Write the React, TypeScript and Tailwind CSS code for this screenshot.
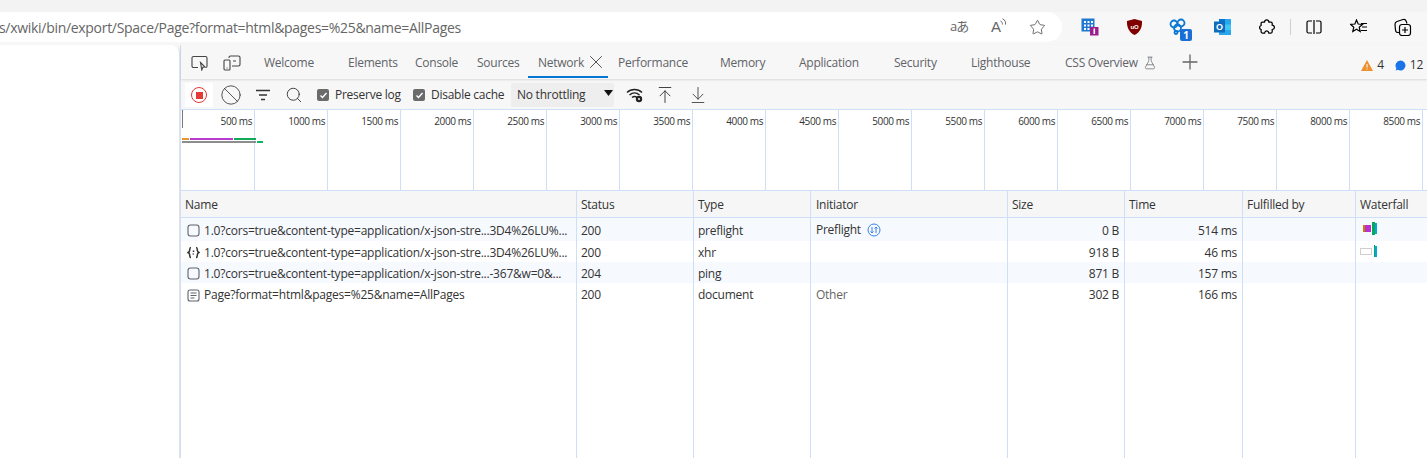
import { ArrowDownToLine, ArrowUpToLine, Ban, FlaskConical, Plus, Search, Star, X } from "lucide-react";
import type { ReactNode } from "react";

const tabs = [
  { label: "Welcome", cls: "w-[84px]" },
  { label: "Elements", cls: "w-[67px]" },
  { label: "Console", cls: "w-[62px]" },
  { label: "Sources", cls: "w-[51px]" },
];

const tabsAfter = [
  { label: "Performance", cls: "w-[102px]" },
  { label: "Memory", cls: "w-[79px]" },
  { label: "Application", cls: "w-[95px]" },
  { label: "Security", cls: "w-[77px]" },
  { label: "Lighthouse", cls: "w-[94px]" },
];

const ticks = [500, 1000, 1500, 2000, 2500, 3000, 3500, 4000, 4500, 5000, 5500, 6000, 6500, 7000, 7500, 8000, 8500];

function ToolbarIcon({ children, className }: { children: ReactNode; className: string }) {
  return <div className={`flex items-center justify-center h-[30px] ${className}`}>{children}</div>;
}

function RowCells({ cells, className, header }: { cells: ReactNode[]; className: string; header?: boolean }) {
  return (
    <div className={`flex shrink-0 ${className}`}>
      <div className={`w-[396px] shrink-0 flex items-center pt-[2px] border-r border-[#cfdff7] overflow-hidden whitespace-nowrap tracking-[-0.22px] ${header ? "pl-[4px]" : "pl-[6px]"}`}>{cells[0]}</div>
      <div className="w-[117px] shrink-0 flex items-center pt-[2px] pl-1 border-r border-[#cfdff7]">{cells[1]}</div>
      <div className="w-[117px] shrink-0 flex items-center pt-[2px] pl-1 border-r border-[#cfdff7]">{cells[2]}</div>
      <div className="w-[197px] shrink-0 flex items-center pt-[2px] pl-[5px] border-r border-[#cfdff7]">{cells[3]}</div>
      <div className={`w-[117px] shrink-0 flex items-center pt-[2px] border-r border-[#cfdff7] ${header ? "pl-[4px]" : "justify-end pr-[5px]"}`}>{cells[4]}</div>
      <div className={`w-[118px] shrink-0 flex items-center pt-[2px] border-r border-[#cfdff7] ${header ? "pl-[4px]" : "justify-end pr-[5px]"}`}>{cells[5]}</div>
      <div className="w-[113px] shrink-0 flex items-center pt-[2px] pl-[4px] border-r border-[#cfdff7]">{cells[6]}</div>
      <div className="flex-1 flex items-center pt-[2px] pl-[4px]">{cells[7]}</div>
    </div>
  );
}

function BlankIcon() {
  return (
    <svg width="13" height="13" viewBox="0 0 13 13" className="mr-[4px] shrink-0" fill="none" stroke="#5f6368" strokeWidth="1.1">
      <rect x="1" y="1" width="11" height="11" rx="2.5" />
    </svg>
  );
}

function XhrIcon() {
  return (
    <svg width="13" height="13" viewBox="0 0 13 13" className="mr-[4px] shrink-0" fill="none" stroke="#333" strokeWidth="1.5">
      <path d="M4 1.500C2.500 1.500 2.800 3 2.600 4.600 2.500 5.600 2 6 1 6.500c1 .5 1.500.9 1.600 1.900.2 1.600-.1 3.100 1.400 3.100" />
      <path d="M9 1.500c1.500 0 1.200 1.500 1.400 3.100.1 1 .6 1.400 1.600 1.900-1 .5-1.500.9-1.600 1.900-.2 1.600.1 3.100-1.400 3.100" />
      <path d="M6.500 4.500v1.500M6 8.500l.5-1" />
    </svg>
  );
}

function DocIcon() {
  return (
    <svg width="13" height="13" viewBox="0 0 13 13" className="mr-[4px] shrink-0" fill="none" stroke="#5f6368" strokeWidth="1.1">
      <rect x="1" y="1" width="11" height="11" rx="2" />
      <path d="M3.500 4h6M3.500 6.500h6M3.500 9h4" />
    </svg>
  );
}

function NameCell({ icon, text }: { icon: ReactNode; text: string }) {
  return (
    <>
      {icon}
      <span>{text}</span>
    </>
  );
}

export default function App() {
  return (
    <div className="w-[1427px] h-[458px] overflow-hidden bg-[#f7f7f7] flex flex-col text-[12px] text-[#333] font-['Open_Sans',sans-serif] tracking-[-0.25px]">
      <div className="h-3 bg-[#f3f3f3] shrink-0" />

      {/* browser toolbar */}
      <div className="h-[33px] shrink-0 flex items-start">
        <div className="w-[1062px] h-[30px] bg-white rounded-r-[15px] flex items-center overflow-hidden shrink-0">
          <div className="flex-1 text-[14px] text-[#666] whitespace-nowrap -ml-[1px] tracking-[-0.3px]">s/xwiki/bin/export/Space/Page?format=html&amp;pages=%25&amp;name=AllPages</div>
          <span className="w-[41px] text-[13px] text-[#666] font-['Open_Sans','Noto_Sans_CJK_JP',sans-serif] tracking-[-1px]">aあ</span>
          <div className="w-[38px] flex items-start">
            <span className="text-[15px] text-[#666] font-['Liberation_Sans',sans-serif]">A</span>
            <svg width="7" height="10" viewBox="0 0 7 10" fill="none" stroke="#666" strokeWidth="1" className="-ml-[1px] mt-[2px]"><path d="M0.500 3c1.500.5 2 2 1.800 3.500M2.500 .8c2.500 1 3.500 3.200 2.900 5.800" /></svg>
          </div>
          <Star size={17} strokeWidth={1.2} className="text-[#555] mr-[16px]" />
        </div>
        <ToolbarIcon className="w-[44px] ml-[6px]">
          <svg width="18" height="18" viewBox="0 0 18 18">
            <rect x="0.500" y="0.500" width="13" height="13" fill="#1f78d1" />
            <path d="M3 3h2v2H3zM6.500 3h2v2h-2zM10 3h2v2h-2zM3 6.500h2v2H3zM6.500 6.500h2v2h-2zM10 6.500h2v2h-2zM3 10h2v2H3zM6.500 10h2v2h-2z" fill="#fff" />
            <rect x="9" y="9" width="8.500" height="8.500" fill="#9b1d8f" />
            <rect x="12.500" y="10.500" width="1.600" height="5.500" fill="#fff" />
          </svg>
        </ToolbarIcon>
        <ToolbarIcon className="w-[44px]">
          <svg width="15" height="16" viewBox="0 0 15 16">
            <path d="M7.500 0 15 2c.2 6-1.500 11-7.500 14C1.500 13-.2 8 0 2z" fill="#800000" />
            <text x="7.500" y="9.500" textAnchor="middle" fontSize="6" fontWeight="700" fill="#fff" fontFamily="Liberation Sans">uO</text>
          </svg>
        </ToolbarIcon>
        <ToolbarIcon className="w-[44px] relative">
          <svg width="18" height="18" viewBox="0 0 18 18" fill="none" stroke="#0a78d4" strokeWidth="1.800">
            <circle cx="5" cy="6" r="3.500" />
            <circle cx="12" cy="5" r="3.500" />
            <circle cx="8.500" cy="10" r="3.500" />
            <circle cx="7" cy="14.500" r="1.500" />
          </svg>
          <span className="absolute left-[24px] top-[17px] w-3 h-3 rounded-[2px] bg-[#1a6fd6] text-white text-[10px] font-bold leading-3 text-center">1</span>
        </ToolbarIcon>
        <ToolbarIcon className="w-[44px]">
          <svg width="17" height="16" viewBox="0 0 17 16">
            <rect x="5" y="0" width="12" height="16" fill="#28a8ea" />
            <path d="M5 0h6v5.500H5z" fill="#0078d4" />
            <path d="M11 5.500h6V11h-6z" fill="#50d9ff" opacity="0.6" />
            <rect x="0" y="2.500" width="11" height="11" fill="#0f6cbd" />
            <text x="5.500" y="11" textAnchor="middle" fontSize="9" fontWeight="700" fill="#fff" fontFamily="Liberation Sans">O</text>
          </svg>
        </ToolbarIcon>
        <ToolbarIcon className="w-[46px]">
          <svg width="16" height="16" viewBox="0 0 16 16" fill="none" stroke="#000" strokeWidth="1.250">
            <path d="M5.500 3C5.700 1.300 6.500.8 7.700.8c1.300 0 2.100.8 2.200 2.200H12c.8 0 1.200.5 1.200 1.200v2c1.400.1 2.200.9 2.200 2.100s-.8 2.100-2.200 2.200v2.300c0 .7-.5 1.200-1.200 1.200H9.800c-.2-1.400-1-2.200-2.100-2.200s-1.900.8-2.100 2.200H3.300c-.7 0-1.200-.5-1.200-1.200V10.500C1.300 10.300.6 9.500.6 8.500s.7-1.900 1.500-2V4.200C2.100 3.500 2.600 3 3.300 3z" />
          </svg>
        </ToolbarIcon>
        <div className="w-px h-4 mt-[7px] bg-[#cfcfcf] shrink-0" />
        <ToolbarIcon className="w-[46px]">
          <svg width="16" height="14" viewBox="0 0 16 14" fill="none" stroke="#000" strokeWidth="1.200">
            <path d="M6 1H2.500A1.500 1.500 0 0 0 1 2.500v9A1.500 1.500 0 0 0 2.500 13H6M10 1h3.500A1.500 1.500 0 0 1 15 2.500v9a1.500 1.500 0 0 1-1.500 1.500H10M8 0v14" />
          </svg>
        </ToolbarIcon>
        <ToolbarIcon className="w-[44px]">
          <svg width="18" height="16" viewBox="0 0 18 16" fill="none" stroke="#000" strokeWidth="1.200">
            <path d="M6.500 1 8.200 5l4.300.4-3.300 2.800 1 4.200-3.700-2.200L2.800 12.400l1-4.200L.6 5.400 4.900 5z" />
            <path d="M11 4.500h6M12 8h5M11 11.500h6" />
          </svg>
        </ToolbarIcon>
        <ToolbarIcon className="w-[44px]">
          <svg width="18" height="18" viewBox="0 0 18 18" fill="none" stroke="#000" strokeWidth="1.200">
            <path d="M5 14.500H4A2.500 2.500 0 0 1 1.500 12L1 6.500C.9 5 1.800 3.900 3 3.500l6-2c1.500-.4 2.700.3 3.200 1.700l.8 2.300" />
            <rect x="5.500" y="6.500" width="11" height="11" rx="2.500" />
            <path d="M11 9v6M8 12h6" />
          </svg>
        </ToolbarIcon>
      </div>

      <div className="flex-1 flex min-h-0">
        <div className="w-[180px] shrink-0 bg-white rounded-tr-lg border-r border-[#e3e3e3]" />

        {/* devtools */}
        <div className="flex-1 flex flex-col min-w-0 bg-white border-l border-[#cfdff7]">
          <div className="h-[34px] shrink-0 flex items-stretch bg-[#f7f7f7] shadow-[0_1px_2px_rgba(0,0,0,0.12)] text-[#5f6368] relative z-10">
            <div className="w-[83px] shrink-0 pl-[10px] pt-[2px] flex items-center">
              <svg width="18" height="16" viewBox="0 0 18 16" fill="none" stroke="#444" strokeWidth="1.100">
                <path d="M7 12.500H2.500A1.500 1.500 0 0 1 1 11V3a1.500 1.500 0 0 1 1.500-1.500h12A1.500 1.500 0 0 1 16 3v8c0 .8-.6 1.400-1.300 1.500" />
                <path d="M9.500 7.500 14 12l-2.200.2-1 2.800z" />
              </svg>
              <svg width="18" height="16" viewBox="0 0 18 16" fill="none" stroke="#444" strokeWidth="1.100" className="ml-[14px]">
                <path d="M6 3V2.500A1.500 1.500 0 0 1 7.500 1h8A1.500 1.500 0 0 1 17 2.500v7a1.500 1.500 0 0 1-1.500 1.500H9" />
                <rect x="1" y="5" width="6" height="10" rx="1" />
                <path d="M10 6h3M3.500 13h1" />
              </svg>
            </div>
            {tabs.map((tab) => (
              <div key={tab.label} className={`${tab.cls} shrink-0 flex items-center pt-[2px]`}>{tab.label}</div>
            ))}
            <div className="w-[80px] shrink-0 flex items-center pl-[10px] border-b-2 border-[#0078d4] mb-px pt-[5px]">
              <span className="w-[47px] -mt-px">Network</span>
              <X size={22} strokeWidth={1} className="text-[#444] -mt-[3px]" />
            </div>
            <div className="w-[10px] shrink-0" />
            {tabsAfter.map((tab) => (
              <div key={tab.label} className={`${tab.cls} shrink-0 flex items-center pt-[2px]`}>{tab.label}</div>
            ))}
            <div className="w-[118px] shrink-0 flex items-center pt-[2px] gap-[5px]">
              <span>CSS Overview</span>
              <FlaskConical size={14} strokeWidth={1.2} />
            </div>
            <Plus size={24} strokeWidth={1.3} className="self-center -ml-[5px] text-[#666]" />
            <div className="flex-1 flex items-center justify-end pr-[4px] pt-[6px] text-[#333]">
              <svg width="12" height="11" viewBox="0 0 12 11"><path d="M6 0 12 11H0z" fill="#ec8f2d" /><path d="M5.500 4h1v3.500h-1zM5.500 8.500h1v1h-1z" fill="#fff" /></svg>
              <span className="ml-[4px] mr-[11px]">4</span>
              <svg width="11" height="11" viewBox="0 0 11 11"><path d="M5.500 .5a5 5 0 1 1-2.600 9.300L.6 10.500l.8-2.200A5 5 0 0 1 5.500.5z" fill="#1a73e8" /></svg>
              <span className="ml-[4px]">12</span>
            </div>
          </div>

          <div className="h-[31px] shrink-0 flex items-center bg-[#f7f7f7] border-b border-[#cfdff7] pt-[2px]">
            <div className="w-[28px] h-6 ml-[4px] bg-white flex items-center justify-center shrink-0">
              <div className="w-4 h-4 rounded-full border border-[#e53935] flex items-center justify-center">
                <div className="w-[7px] h-[7px] bg-[#e53935]" />
              </div>
            </div>
            <Ban size={22} strokeWidth={0.9} className="ml-[7px] shrink-0 text-[#333]" />
            <svg width="16" height="12" viewBox="0 0 16 12" fill="none" stroke="#333" strokeWidth="1.300" className="ml-[13px] shrink-0">
              <path d="M1 1.500h14M4 6h8M6 10.500h4" />
            </svg>
            <Search size={18} strokeWidth={1.2} className="ml-[14px] shrink-0 text-[#333]" />
            <div className="w-3 h-3 ml-[14px] bg-[#6b6b6b] rounded-[2px] flex items-center justify-center shrink-0">
              <svg width="9" height="9" viewBox="0 0 9 9" fill="none" stroke="#fff" strokeWidth="1.400"><path d="M1.500 4.500 3.500 6.500 7.500 2" /></svg>
            </div>
            <span className="ml-[6px] w-[78px] shrink-0">Preserve log</span>
            <div className="w-3 h-3 bg-[#6b6b6b] rounded-[2px] flex items-center justify-center shrink-0">
              <svg width="9" height="9" viewBox="0 0 9 9" fill="none" stroke="#fff" strokeWidth="1.400"><path d="M1.500 4.500 3.500 6.500 7.500 2" /></svg>
            </div>
            <span className="ml-[6px] w-[80px] shrink-0">Disable cache</span>
            <div className="w-[103px] h-6 bg-[#eeeeee] rounded-[2px] flex items-center justify-between pl-[6px] pr-[1px] shrink-0">
              <span>No throttling</span>
              <svg width="9" height="6" viewBox="0 0 9 6" className="mb-1"><path d="M0 0h9L4.500 6z" fill="#111" /></svg>
            </div>
            <svg width="18" height="16" viewBox="0 0 18 16" fill="none" stroke="#222" strokeWidth="1.400" className="ml-[12px] shrink-0">
              <path d="M1 5.500C5 1.500 12 1.500 16 5.500M3.500 8c3-2.800 7-2.800 10 0M6 10.500c1.500-1.300 3.500-1.300 5 0" />
              <circle cx="13" cy="12" r="3.200" fill="#222" stroke="none" />
              <circle cx="13" cy="12" r="1" fill="#f7f7f7" stroke="none" />
            </svg>
            <ArrowUpToLine size={20} strokeWidth={1.100} className="ml-[11px] shrink-0 text-[#333]" />
            <ArrowDownToLine size={20} strokeWidth={1.100} className="ml-[13px] shrink-0 text-[#444]" />
          </div>

          {/* overview */}
          <div className="h-[81px] shrink-0 flex relative border-b border-[#cfdff7]">
            {ticks.map((t, i) => (
              <div key={t} className={`${i === 0 ? "w-[74px]" : "w-[73px]"} shrink-0 border-r border-[#cfdff7] text-right text-[10px] pr-[2px] pt-[5px] leading-[13px] tracking-[-0.4px]`}>{t} ms</div>
            ))}
            <div className="absolute left-[1px] top-0 w-px h-[18px] bg-[#777]" />
            <div className="absolute left-[1px] top-[28px] flex flex-col gap-px">
              <div className="flex gap-px h-[2px]">
                <div className="w-[7px] bg-[#e39a2d]" />
                <div className="w-[43px] bg-[#b93ad0]" />
                <div className="w-[22px] bg-[#10a957]" />
              </div>
              <div className="flex gap-px h-[2px]">
                <div className="w-[74px] bg-[#8d8d8d]" />
                <div className="w-[6px] bg-[#10b560]" />
              </div>
            </div>
          </div>

          {/* table */}
          <RowCells header className="h-[27px] bg-[#f6f6f6] border-b border-[#cfdff7]" cells={["Name", "Status", "Type", "Initiator", "Size", "Time", "Fulfilled by", "Waterfall"]} />
          <RowCells
            className="h-[23px] bg-[#f6f9fe]"
            cells={[
              <NameCell icon={<BlankIcon />} text="1.0?cors=true&content-type=application/x-json-stre...3D4%26LU%..." />,
              "200",
              "preflight",
              <>
                <span className="-mt-[2px]">Preflight</span>
                <svg width="14" height="14" viewBox="0 0 14 14" fill="none" stroke="#3b82e6" strokeWidth="1" className="ml-[6px] -mt-[2px]">
                  <circle cx="7" cy="7" r="6" />
                  <path d="M5 4v6M3.500 8.500 5 10l1.500-1.500M9 10V4M7.500 5.500 9 4l1.500 1.500" />
                </svg>
              </>,
              "0 B",
              "514 ms",
              "",
              <div className="flex items-center ml-[3px] -mt-[4px]">
                <div className="w-[2px] h-[7px] bg-[#c47f00]" />
                <div className="w-[6px] h-[7px] bg-[#b92fd0]" />
                <div className="w-[3px] h-[13px] bg-[#0aa84f] ml-px" />
                <div className="w-[2px] h-[11px] bg-[#00a4ef]" />
              </div>,
            ]}
          />
          <RowCells
            className="h-[21px] bg-white"
            cells={[
              <NameCell icon={<XhrIcon />} text="1.0?cors=true&content-type=application/x-json-stre...3D4%26LU%..." />,
              "200",
              "xhr",
              "",
              "918 B",
              "46 ms",
              "",
              <div className="flex items-center -mt-[3px]">
                <div className="w-3 h-[7px] border border-[#cfcfcf] bg-white mr-[2px]" />
                <div className="w-px h-3 bg-[#0aa84f]" />
                <div className="w-[2px] h-[11px] bg-[#00a4ef]" />
              </div>,
            ]}
          />
          <RowCells
            className="h-[21px] bg-[#f6f9fe]"
            cells={[
              <NameCell icon={<BlankIcon />} text="1.0?cors=true&content-type=application/x-json-stre...-367&w=0&..." />,
              "204",
              "ping",
              "",
              "871 B",
              "157 ms",
              "",
              "",
            ]}
          />
          <RowCells
            className="h-[22px] bg-white"
            cells={[
              <NameCell icon={<DocIcon />} text="Page?format=html&pages=%25&name=AllPages" />,
              "200",
              "document",
              <span className="text-[#666]">Other</span>,
              "302 B",
              "166 ms",
              "",
              "",
            ]}
          />
          <RowCells className="flex-1 bg-white" cells={["", "", "", "", "", "", "", ""]} />
        </div>
      </div>
    </div>
  );
}
